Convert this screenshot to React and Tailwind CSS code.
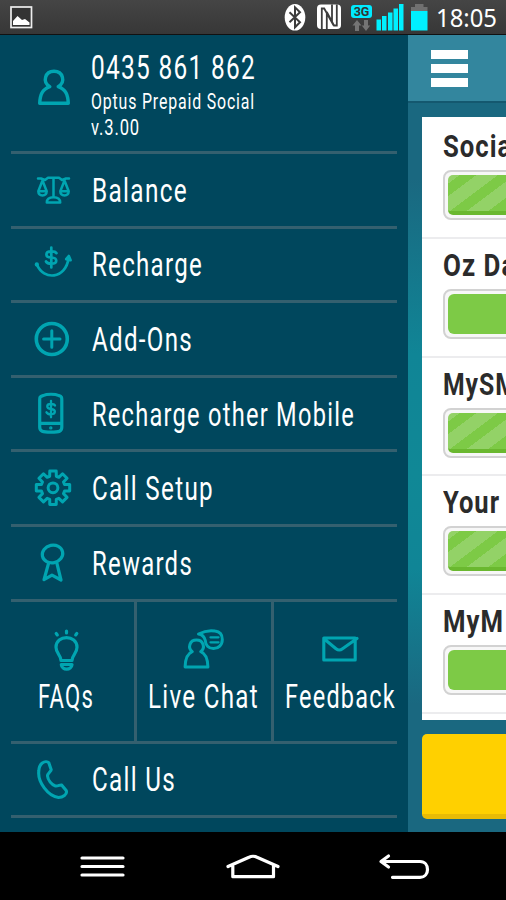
import { useLayoutEffect, useRef, useState } from 'react';

// Single line of text condensed horizontally to a given width.
function Fit({ children, width, className }) {
  const ref = useRef(null);
  const [natural, setNatural] = useState(width);
  useLayoutEffect(() => {
    setNatural(ref.current.getBoundingClientRect().width);
  }, []);
  return (
    <span className={`block whitespace-nowrap ${className}`} style={{ width }}>
      <span className="block origin-left" style={{ transform: `scaleX(${width / natural})` }}>
        <span ref={ref} className="inline-block">{children}</span>
      </span>
    </span>
  );
}

function Icon({ w, h, className = '', sw = 3.2, children }) {
  return (
    <svg width={w} height={h} viewBox={`0 0 ${w} ${h}`} fill="none" stroke="#00a5b1" strokeWidth={sw} strokeLinecap="round" strokeLinejoin="round" className={`block shrink-0 ${className}`}>
      {children}
    </svg>
  );
}

/* Row icons share a 44x44 canvas whose left edge is at x=31. */
const UserIcon = () => (
  <Icon w={44} h={44} sw={3.4}>
    <path d="M18.8 22.6C11 25.5 9.1 31 8.7 39.3H37.3C36.9 31 35 25.5 27.2 22.6C35 18 32 7.3 23 7.3S11 18 18.8 22.6Z" />
  </Icon>
);
const BalanceIcon = () => (
  <Icon w={44} h={44} sw={2.5}>
    <path d="M7 10.5H10L14 12L17 9.7H28L31 12L35 10.5H38M22.5 9.7V29M11.5 12.5L7.3 23.3H15.7ZM33.5 12.5L29.3 23.3H37.7ZM7.3 23.5C7.6 28.7 15.4 28.7 15.7 23.5M29.3 23.5C29.6 28.7 37.4 28.7 37.7 23.5M15.8 34.6C15.8 30.7 18 29.2 22.5 29.2S29.2 30.7 29.2 34.6Z" />
  </Icon>
);
const RechargeIcon = () => (
  <Icon w={44} h={44} sw={2.7}>
    <path d="M25.5 11.2C24.6 9.7 22.6 9.4 20.3 9.4C13.8 9.4 13.8 15.3 20.3 15.5C27 15.8 26.8 21.7 20.3 21.7C17.5 21.7 15.8 21 15 19.5M20.3 5.5V25.5" />
    <path d="M6 22.800C12.500 38.500 34.500 37.500 37.700 16" />
    <circle cx="5.800" cy="22.500" r="0.800" />
    <path d="M35.200 17.200L37.800 14L39.600 18.200Z" fill="#00a5b1" />
  </Icon>
);
const AddIcon = () => (
  <Icon w={44} h={44} sw={3.6}>
    <circle cx="20.800" cy="22" r="15.500" />
    <path strokeWidth="3" d="M20.800 13.800V30.200M12.600 22H29" />
  </Icon>
);
const PhoneIcon = () => (
  <Icon w={44} h={44} sw={3.2}>
    <path d="M12 3.600C16 1.800 24 1.800 28 3.600C30.800 4.400 30.800 5.500 30.800 8V35C30.800 39.500 28.500 40.200 20 40.200S8.700 39.500 8.700 35V8C8.700 5.500 8.700 4.400 12 3.600ZM9 31.300H30.500" />
    <path strokeWidth="2.300" d="M24 13.500C23.300 12.100 21.500 12 20 12C15 12 15 16.500 20 17C25.300 17.500 25 22.300 20 22.300C17.500 22.300 16.200 21.500 15.500 20.300M20 8.800V25.300" />
    <circle cx="19.800" cy="35.900" r="0.700" strokeWidth="2" />
  </Icon>
);
const gear = (() => {
  const pts = [];
  for (let i = 0; i < 8; i++) {
    const a = (i * Math.PI) / 4 - Math.PI / 2;
    [[12, -0.28], [17, -0.19], [17, 0.19], [12, 0.28]].forEach(([r, d]) => {
      pts.push(`${(22 + r * Math.cos(a + d)).toFixed(2)} ${(21.8 + r * Math.sin(a + d)).toFixed(2)}`);
    });
  }
  return `M${pts.join('L')}Z`;
})();
const GearIcon = () => (
  <Icon w={44} h={44} sw={3}>
    <path d={gear} />
    <circle cx="22" cy="21.800" r="4.900" />
  </Icon>
);
const RewardIcon = () => (
  <Icon w={44} h={44} sw={3.2}>
    <ellipse cx="21.500" cy="13" rx="10.300" ry="8.800" transform="rotate(-12 21.500 13)" />
    <path d="M17.500 22.500L13 38.700L21 34.200L30 39L25.700 21.500" />
  </Icon>
);
const CallIcon = () => (
  <Icon w={44} h={44} sw={3.1}>
    <path d="M11.300 6C13.500 4.500 16.500 4.300 17.800 5.800L20.200 12.700C20.200 14.300 16.300 16.300 16.500 19C16.800 23 20.800 28 24.400 29C27 29.500 29 27.500 30.600 28L35.200 33.500C36.800 37.500 31.500 40.500 27.500 40.500C17 39 6.500 25 7.800 14C8 10.500 9.300 7.500 11.300 6Z" />
  </Icon>
);
const BulbIcon = () => (
  <Icon w={28} h={44} sw={3.2}>
    <path d="M9 32.500C9 27 4 25.500 4 19.300C4 6.500 25 6.500 25 19.300C25 25.500 20 27 20 32.500ZM9.300 36.500H20C19.500 42.700 9.800 42.700 9.300 36.500ZM14.500 3V5M4.200 5.500L5.300 6.900M24.800 5.500L23.700 6.900" />
  </Icon>
);
const ChatIcon = () => (
  <Icon w={42} h={44} sw={3}>
    <path d="M10.300 23.600C5 25.500 3.300 32 3.100 38.900H25.900C25.700 32 24 25.500 18.700 23.600C23.600 20 21.500 12 14.500 12S5.400 20 10.300 23.600Z" />
    <path d="M16.500 6C23 2.600 29 2.300 33 3C38 3.500 40.300 7 40.300 11.500C40.300 17 36.500 20.500 31.500 20.500C26.500 20.500 23.300 17 23.300 12.500C22.300 8.500 20 6.500 16.500 6Z" />
    <path strokeWidth="2.300" d="M28.500 9.300H36.500M28.500 14.300H36.500" />
  </Icon>
);
const MailIcon = () => (
  <Icon w={38} h={44} sw={3.1}>
    <path d="M2.800 10H34.200V32H2.800ZM3 10.700L15 20.700C17.500 22.700 19 22.700 21.500 20.700L36 10.500" />
  </Icon>
);

const rows = [
  ['Balance', BalanceIcon, 96],
  ['Recharge', RechargeIcon, 111],
  ['Add-Ons', AddIcon, 101],
  ['Recharge other Mobile', PhoneIcon, 263],
  ['Call Setup', GearIcon, 122],
  ['Rewards', RewardIcon, 101],
];

function MenuRow({ label, icon: I, width }) {
  return (
    <div className="flex h-[74.6px] items-center border-b-[3px] border-[#34606f] pl-5">
      <I />
      <Fit width={width} className="mt-[2px] ml-[16.5px] text-[33.5px] leading-[40px] tracking-[1.8px]">{label}</Fit>
    </div>
  );
}

function Tile({ label, icon: I, width, className }) {
  return (
    <div className={`flex flex-col items-center pt-[26px] ${className}`}>
      <I className="" />
      <Fit width={width} className="mt-[5px] text-[33.5px] leading-[40px] tracking-[1.8px]">{label}</Fit>
    </div>
  );
}

function Meter({ title, width, striped }) {
  return (
    <div className="h-[118.75px] shrink-0 border-b-2 border-[#ececee] pt-[9px] pl-[21px]">
      <Fit width={width} className="text-[31px] leading-[36px] font-bold tracking-[1.2px] text-[#2b2b2b]">{title}</Fit>
      <div className="mt-[5px] h-[50px] w-[200px] rounded-lg border-2 border-[#d2d2d2] bg-[#f7f7f7] p-[3px]">
        {striped ? (
          <div className="h-full rounded-[5px] border-b-4 border-[#6ab82f] bg-[repeating-linear-gradient(143deg,#93d267_0px,#93d267_7px,#7dca46_7px,#7dca46_17px,#93d267_17px,#93d267_23px)]" />
        ) : (
          <div className="h-full rounded-[6px] bg-[#7dca46]" />
        )}
      </div>
    </div>
  );
}

function StatusBar() {
  return (
    <div className="flex h-[35px] shrink-0 items-center border-b border-[#111] bg-linear-to-b from-[#454545] to-[#373737] pl-[10px]">
      <svg width="23" height="23" viewBox="0 0 23 23" className="mt-px block">
        <rect x="1" y="1" width="20.500" height="20.500" fill="#333" stroke="#eee" strokeWidth="1.700" />
        <path d="M3 19V15L7.500 10L12 14L15 13L19.500 16.500V19Z" fill="#fff" />
      </svg>
      <svg width="152" height="34" viewBox="280 0 152 34" className="ml-[247px] block">
        <ellipse cx="295" cy="17.300" rx="10.300" ry="13.300" fill="#fff" />
        <path d="M289.500 12.300L300 22.300L295 27.300V7.300L300 12.300L289.500 22.300" fill="none" stroke="#3c3c3c" strokeWidth="2" />
        <rect x="317" y="4.500" width="24" height="24.500" rx="4" fill="#fff" />
        <path d="M321.800 29V8.500H324.200L332 22.500V4.500M326.800 29V12L334 25.500H336.800V4.500" fill="none" stroke="#3c3c3c" strokeWidth="1.800" />
        <rect x="351" y="5" width="21" height="13" rx="3" fill="#00eaff" />
        <text x="361.500" y="16" textAnchor="middle" fontSize="12.500" fontWeight="700" fontFamily="Roboto" fill="#333">3G</text>
        <path d="M357 20L361.500 25.500H359V31H355V25.500H352.500ZM366 31L361.800 25.500H364V20H368V25.500H370.200Z" fill="#747474" />
        <path d="M376.500 19.500h4.500v11h-4.500zM382 16h4.500v14.500h-4.500zM388 12.500h4.500v18h-4.500zM393.500 8.500h4.500v22h-4.500zM399 4h4.500v26.500h-4.500z" fill="#00f0ff" />
        <path d="M411 7h4V4h8.500v3h4v4h-16.500z" fill="#707070" />
        <rect x="411" y="11" width="16.500" height="19.500" fill="#00f0ff" />
      </svg>
      <Fit width={61} className="mt-[2px] ml-[4px] font-['Noto_Sans'] text-[24.5px] leading-[34px] text-white">18:05</Fit>
    </div>
  );
}

export default function App() {
  return (
    <div className="flex h-[900px] w-[506px] flex-col overflow-hidden bg-black font-[Roboto,sans-serif]">
      <StatusBar />
      <div className="flex h-[797px] shrink-0">
        <div className="w-[408px] shrink-0 bg-[#00475d] pl-[11px] text-white">
          <div className="w-[386px]">
            <div className="flex h-[119px] border-b-[3px] border-[#34606f] pl-5">
              <div className="mt-[29px]"><UserIcon /></div>
              <div className="ml-4 pt-[12.5px]">
                <Fit width={165} className="text-[33.5px] leading-[40px] tracking-[1.8px]">0435 861 862</Fit>
                <Fit width={164} className="text-[22.5px] leading-[26px] tracking-[1.2px]">Optus Prepaid Social</Fit>
                <Fit width={49} className="text-[22.5px] leading-[27px] tracking-[1.2px]">v.3.00</Fit>
              </div>
            </div>
            {rows.map(([label, icon, width]) => (
              <MenuRow key={label} label={label} icon={icon} width={width} />
            ))}
            <div className="flex h-[142px] border-b-[3px] border-[#34606f]">
              <Tile label="FAQs" icon={BulbIcon} width={56} className="w-[126px] border-r-[3px] border-[#34606f] pr-[13px]" />
              <Tile label="Live Chat" icon={ChatIcon} width={111} className="w-[137px] border-r-[3px] border-[#34606f] pr-[2px]" />
              <Tile label="Feedback" icon={MailIcon} width={111} className="flex-1 pl-[9px]" />
            </div>
            <MenuRow label="Call Us" icon={CallIcon} width={84} />
          </div>
        </div>
        <div className="flex w-[98px] flex-col overflow-hidden bg-[linear-gradient(180deg,#1a6880_0%,#1a6880_18%,#108596_40%,#108896_55%,#108596_67%,#1a6880_84%,#1a6880_100%)]">
          <div className="flex h-[68px] shrink-0 flex-col gap-[5px] border-b-2 border-[#14586f] bg-[#33869e] pt-[15px] pl-[23px]">
            <div className="h-[9px] w-[37px] bg-white" />
            <div className="h-[9px] w-[37px] bg-white" />
            <div className="h-[9px] w-[37px] bg-white" />
          </div>
          <div className="mt-[14px] ml-[14px] h-[603px] w-[240px] shrink-0 overflow-hidden bg-white pt-[3px]">
            <Meter title="Social" width={77} striped />
            <Meter title="Oz Data" width={98} />
            <Meter title="MySMS" width={91} striped />
            <Meter title="Your" width={57} striped />
            <Meter title="MyM" width={61} />
          </div>
          <div className="mt-[14px] ml-[14px] h-[85px] w-[240px] shrink-0 rounded-[5px] border-b-[5px] border-[#e8bb05] bg-[#ffd000]" />
        </div>
      </div>
      <svg width="506" height="68" viewBox="0 832 506 68" fill="none" stroke="#fff" strokeWidth="3.200" strokeLinecap="round" strokeLinejoin="round" className="block shrink-0">
        <path d="M82 858H123M82 866.500H123M82 875H123" />
        <path d="M228 866.500L249 857.200Q253 855.300 257 857.200L278 866.500M232.800 866V876.700H273.500V866" />
        <path d="M388.500 856L381 861.500L388.500 867M383 861.500H420C430 861.500 430 877.300 420 877.300H392.500" />
      </svg>
    </div>
  );
}
